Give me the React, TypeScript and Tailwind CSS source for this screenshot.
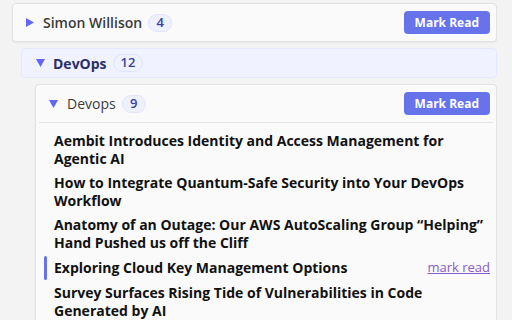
import { useState } from "react";

const items: string[][] = [
  ["Aembit Introduces Identity and Access Management for", "Agentic AI"],
  ["How to Integrate Quantum-Safe Security into Your DevOps", "Workflow"],
  ["Anatomy of an Outage: Our AWS AutoScaling Group \u201cHelping\u201d", "Hand Pushed us off the Cliff"],
  ["Exploring Cloud Key Management Options"],
  ["Survey Surfaces Rising Tide of Vulnerabilities in Code", "Generated by AI"],
];

const Badge = ({ n }: { n: number }) => (
  <span className="ml-[6px] inline-flex h-[18px] min-w-[24px] items-center justify-center rounded-full border border-[#e0e5fb] bg-[#eef1ff] px-[7px] text-[13px] font-semibold text-[#3b3f9c]">
    {n}
  </span>
);

const MarkButton = () => (
  <button className="h-[23px] rounded-[4px] bg-[#6673ea] px-[11px] text-[12px] font-bold text-white">
    Mark Read
  </button>
);

const Arrow = ({ open }: { open: boolean }) => (
  <span className="inline-flex w-[10px] justify-center text-[#6366f1]">
    {open ? (
      <svg width="9" height="8" viewBox="0 0 9 8"><path d="M0 0h9L4.5 8z" fill="currentColor" /></svg>
    ) : (
      <svg width="8" height="9" viewBox="0 0 8 9"><path d="M0 0v9l8-4.5z" fill="currentColor" /></svg>
    )}
  </span>
);

export default function App() {
  const [hover, setHover] = useState(3);

  return (
    <div className="h-[320px] w-[512px] overflow-hidden bg-[#f3f3f3] pl-[12px] pr-[15px] pt-[3px] font-['Open_Sans','Noto_Sans',sans-serif] text-[#333]">
      <div className="flex h-[39px] items-center justify-between rounded-[4px] border border-[#e2e2e2] bg-[#fafafa] pl-[12px] pr-[6px] shadow-[0_1px_2px_rgba(0,0,0,0.05)]">
        <div className="flex items-center">
          <Arrow open={false} />
          <span className="ml-[8px] text-[14px] font-semibold text-[#3a3a3a]">Simon Willison</span>
          <Badge n={4} />
        </div>
        <MarkButton />
      </div>

      <div className="ml-[9px] mt-[6px]">
        <div className="flex h-[30px] items-center rounded-[4px] border border-[#e4e9fd] bg-[#f0f3ff] pl-[13px]">
          <Arrow open />
          <span className="ml-[8px] text-[14px] font-bold text-[#2b2d6b]">DevOps</span>
          <Badge n={12} />
        </div>

        <div className="ml-[14px] mt-[6px] rounded-[4px] border border-[#e2e2e2] bg-[#fafafa] shadow-[0_1px_2px_rgba(0,0,0,0.05)]">
          <div className="mx-[3px] flex h-[38px] items-center justify-between border-b border-[#e6e6e6] pl-[9px] pr-[3px]">
            <div className="flex items-center">
              <Arrow open />
              <span className="ml-[9px] text-[14px] text-[#3a3a3a]">Devops</span>
              <Badge n={9} />
            </div>
            <MarkButton />
          </div>

          <div className="flex flex-col pt-[6px]">
            {items.map((lines, i) => (
              <div
                key={i}
                onMouseEnter={() => setHover(i)}
                className="relative flex items-center justify-between py-[3px] pl-[18px] pr-[6px]"
              >
                {hover === i && (
                  <span className="absolute left-[8px] top-[1px] bottom-[1px] w-[3px] rounded-full bg-[#6673ea]" />
                )}
                <span className="flex flex-col whitespace-nowrap text-[14px] font-bold leading-[18px] text-[#111]">
                  {lines.map((l, j) => (
                    <span key={j}>{l}</span>
                  ))}
                </span>
                {hover === i && (
                  <a href="#" className="text-[13px] text-[#8a5cc8] underline">mark read</a>
                )}
              </div>
            ))}
          </div>
        </div>
      </div>
    </div>
  );
}
